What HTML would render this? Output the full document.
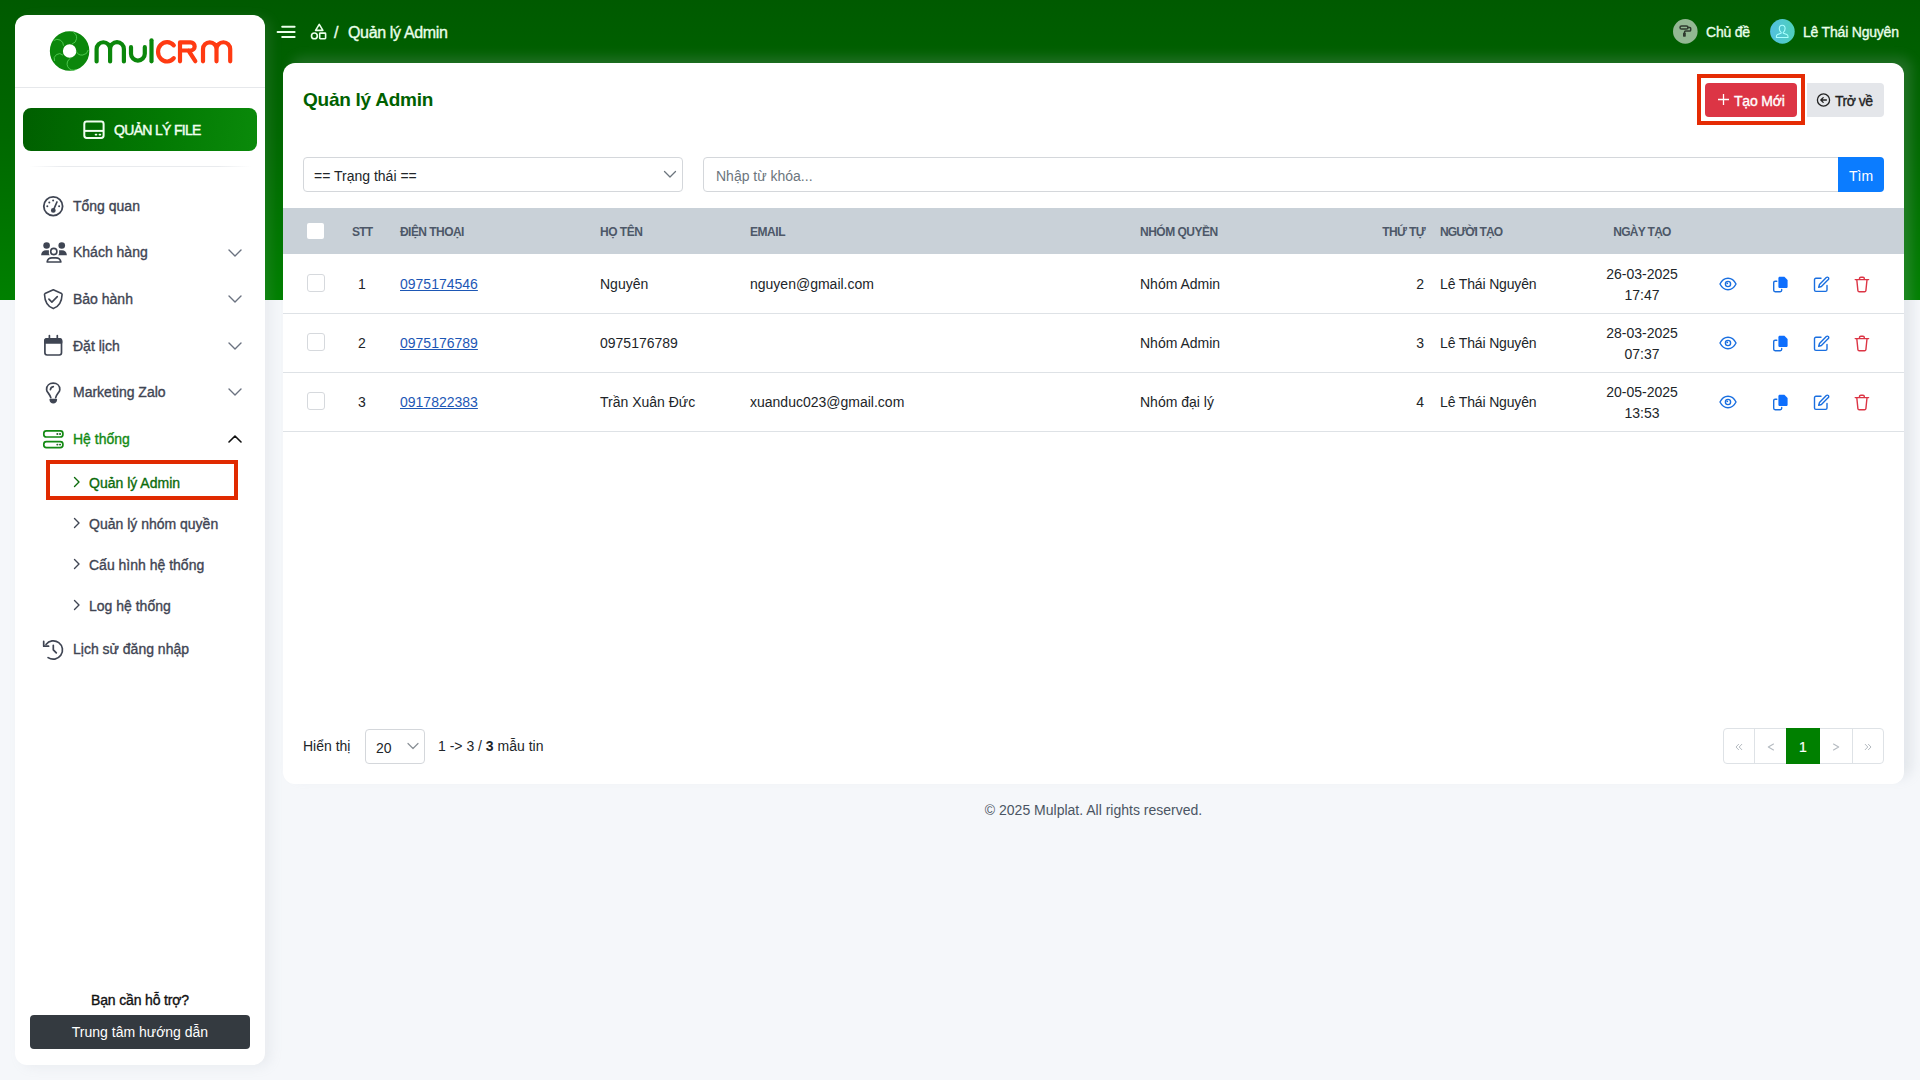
<!DOCTYPE html>
<html lang="vi">
<head>
<meta charset="utf-8">
<title>Quản lý Admin</title>
<style>
*{box-sizing:border-box;margin:0;padding:0}
html,body{width:1920px;height:1080px;overflow:hidden}
body{position:relative;background:#f5f7fa;font-family:"Liberation Sans",sans-serif;font-size:14px;color:#212529}
.abs{position:absolute}
.t{position:absolute;white-space:nowrap;line-height:1}
#bg{left:0;top:0;width:1920px;height:300px;background:linear-gradient(180deg,#005a00 0%,#006800 45%,#008000 100%)}
#side{left:15px;top:15px;width:250px;height:1050px;background:#fff;border-radius:12px;box-shadow:6px 2px 12px rgba(160,170,180,.13)}
#card{left:283px;top:63px;width:1621px;height:721px;background:#fff;border-radius:12px;box-shadow:8px -6px 12px rgba(160,170,180,.2)}
.menu{color:#3f4553;font-size:14px;-webkit-text-stroke:0.35px #3f4553}
.m{-webkit-text-stroke:0.35px currentColor}
.chev{position:absolute;left:228px;width:14px;height:8px}
</style>
</head>
<body>
<div id="bg" class="abs"></div>

<!-- SIDEBAR -->
<div id="side" class="abs"></div>
<div class="abs" style="left:15px;top:87px;width:250px;height:1px;background:#e6e8eb"></div>
<div class="abs" style="left:29px;top:166px;width:222px;height:1px;background:linear-gradient(90deg,rgba(230,232,235,0),#e9ebee 15%,#e9ebee 85%,rgba(230,232,235,0))"></div>

<!-- logo -->
<svg class="abs" style="left:0;top:0" width="265" height="90" viewBox="0 0 265 90">
  <circle cx="69.6" cy="51" r="13.25" fill="none" stroke="#0b870b" stroke-width="13"/>
  <g fill="none" stroke="#5cd65c" stroke-width="0.8">
    <path d="M53.6 40.6 A6.2 6.2 0 0 1 63.5 45.8"/>
    <path d="M73.4 32.3 A6.4 6.4 0 0 1 72 44"/>
    <path d="M76.25 51.6 A6.4 6.4 0 0 0 88.2 50"/>
    <path d="M54.6 61 A5.2 5.2 0 0 1 63 55.2"/>
    <path d="M70.5 58.3 A6 6 0 0 0 76.25 69.5"/>
  </g>
  <g fill="none" stroke="#0b870b" stroke-width="4.2" stroke-linecap="round">
    <path d="M96.6 61.4 V49 A6.75 6.75 0 0 1 110.1 49 V61.4 M110.1 49 A6.9 6.9 0 0 1 123.9 49 V61.4"/>
    <path d="M131 47.2 V53.7 A6.9 6.9 0 0 0 144.8 53.7 V47.2"/>
    <path d="M151.5 40.3 V61.3"/>
  </g>
  <g fill="none" stroke="#ff3a12" stroke-width="4.2" stroke-linecap="round" stroke-linejoin="round">
    <path d="M173.8 45.4 A9 9.7 0 1 0 173.8 58.2"/>
    <path d="M180 61.3 V42.4 H190.6 A4.05 4.05 0 0 1 190.6 50.5 H180 M188.5 50.5 L195.3 61.2"/>
    <path d="M203 61.3 V49.1 A6.75 6.75 0 0 1 216.5 49.1 V61.3 M216.5 49.1 A6.85 6.85 0 0 1 230.2 49.1 V61.3"/>
  </g>
</svg>

<!-- file button -->
<div class="abs" style="left:23px;top:108px;width:234px;height:43px;border-radius:8px;background:linear-gradient(100deg,#005f00 0%,#037a03 60%,#0a8a0a 100%)"></div>
<svg class="abs" style="left:78px;top:114px" width="30" height="30" viewBox="0 0 30 30" fill="none" stroke="#f0fff0" stroke-width="2">
  <rect x="6.3" y="7.6" width="19.3" height="16.4" rx="2.4"/>
  <path d="M6.3 16.9 H25.6"/>
  <path d="M17.6 20.6 h0.8 M21.5 20.6 h0.8" stroke-width="1.8" stroke-linecap="round"/>
</svg>
<div class="t m" style="left:114px;top:123px;font-size:14px;color:#f0fff0;letter-spacing:-0.68px;-webkit-text-stroke:0.45px #f0fff0">QUẢN LÝ FILE</div>

<!-- menu items -->
<svg class="abs" style="left:38px;top:192px" width="30" height="30" viewBox="0 0 30 30" fill="none" stroke="#3f4553" stroke-width="1.6" stroke-linecap="round">
  <circle cx="15.2" cy="14.2" r="9.4" stroke-width="1.8"/>
  <path d="M15.3 18.4 L19 9.9"/>
  <circle cx="15.3" cy="18.4" r="1.6" fill="#3f4553"/>
  <g fill="#3f4553" stroke="none"><circle cx="15.1" cy="8.4" r="1"/><circle cx="11.3" cy="10.4" r="1"/><circle cx="9.3" cy="14.3" r="1"/><circle cx="21.1" cy="14.3" r="1"/></g>
</svg>
<div class="t menu" style="left:73px;top:199px">Tổng quan</div>

<svg class="abs" style="left:38px;top:238px" width="30" height="30" viewBox="0 0 30 30" fill="none" stroke="#3f4553" stroke-width="1.6" stroke-linecap="round" stroke-linejoin="round">
  <g fill="#3f4553" stroke="none">
    <circle cx="8.6" cy="7.5" r="3.3"/><circle cx="23.75" cy="7.5" r="3.3"/>
    <path d="M3.1 17.2 C3.3 14 5.3 12.2 8 12.2 H10.9 V16 L11.8 17.2 Z"/>
    <path d="M28.9 17.2 C28.7 14 26.7 12.2 24 12.2 H21.1 V16 L20.2 17.2 Z"/>
  </g>
  <circle cx="15.8" cy="13.5" r="3.1"/>
  <path d="M9.1 24 C9.5 21.3 11.5 19.9 14 19.9 H17.9 C20.4 19.9 22.4 21.3 22.9 24 Z"/>
</svg>
<div class="t menu" style="left:73px;top:245px">Khách hàng</div>

<svg class="abs" style="left:38px;top:284px" width="30" height="30" viewBox="0 0 30 30" fill="none" stroke="#3f4553" stroke-width="1.6" stroke-linecap="round" stroke-linejoin="round">
  <path d="M15.3 5.8 L23.6 9.6 C23.9 9.8 24.1 10.1 24.1 10.5 C23.8 17.8 21 22.6 15.3 24.6 C9.6 22.6 6.8 17.8 6.5 10.5 C6.5 10.1 6.7 9.8 7 9.6 Z"/>
  <path d="M10.9 15.1 L13.9 18.1 L19.3 12.6"/>
</svg>
<div class="t menu" style="left:73px;top:292px">Bảo hành</div>

<svg class="abs" style="left:38px;top:330px" width="30" height="30" viewBox="0 0 30 30" fill="none" stroke="#3f4553" stroke-width="1.7" stroke-linecap="round" stroke-linejoin="round">
  <rect x="6.9" y="8.8" width="16.6" height="16.2" rx="2.2"/>
  <path d="M6.9 11.2 C6.9 9.8 7.9 8.8 9.1 8.8 H21.3 C22.5 8.8 23.5 9.8 23.5 11.2 V12.8 H6.9 Z" fill="#3f4553"/>
  <path d="M11.4 5.6 V8.4 M19.3 5.6 V8.4"/>
</svg>
<div class="t menu" style="left:73px;top:339px">Đặt lịch</div>

<svg class="abs" style="left:38px;top:377px" width="30" height="30" viewBox="0 0 30 30" fill="none" stroke="#3f4553" stroke-width="1.7" stroke-linecap="round" stroke-linejoin="round">
  <path d="M12.8 20.6 C12.4 18.6 11 17.2 9.7 15.3 C8.9 14.2 8.6 13.2 8.6 12.4 C8.6 8.6 11.5 6.2 15.2 6.2 C18.9 6.2 21.8 8.6 21.8 12.4 C21.8 13.2 21.5 14.2 20.7 15.3 C19.4 17.2 18 18.6 17.7 20.6"/>
  <path d="M12.4 12.6 C12.7 11 13.8 9.9 15.3 9.7"/>
  <path d="M12.3 22.6 H18.3 C18 24.6 16.8 25.6 15.3 25.6 C13.8 25.6 12.6 24.6 12.3 22.6 Z" fill="#3f4553"/>
</svg>
<div class="t menu" style="left:73px;top:385px">Marketing Zalo</div>

<svg class="abs" style="left:38px;top:424px" width="30" height="30" viewBox="0 0 30 30" fill="none" stroke="#138a13" stroke-width="1.7" stroke-linecap="round" stroke-linejoin="round">
  <rect x="5.8" y="6.9" width="19.1" height="6.1" rx="2.6"/>
  <rect x="5.8" y="17.6" width="19.1" height="6.1" rx="2.6"/>
  <path d="M19.2 10 h0.3 M21.9 10 h0.3 M19.2 20.6 h0.3 M21.9 20.6 h0.3" stroke="#2f6a2f" stroke-width="1.8"/>
</svg>
<div class="t m" style="left:73px;top:432px;color:#138a13">Hệ thống</div>

<!-- chevrons -->
<svg class="chev" style="top:249px" viewBox="0 0 14 8" fill="none" stroke="#6b7280" stroke-width="1.4" stroke-linecap="round" stroke-linejoin="round"><path d="M1 1 L7 7 L13 1"/></svg>
<svg class="chev" style="top:295px" viewBox="0 0 14 8" fill="none" stroke="#6b7280" stroke-width="1.4" stroke-linecap="round" stroke-linejoin="round"><path d="M1 1 L7 7 L13 1"/></svg>
<svg class="chev" style="top:342px" viewBox="0 0 14 8" fill="none" stroke="#6b7280" stroke-width="1.4" stroke-linecap="round" stroke-linejoin="round"><path d="M1 1 L7 7 L13 1"/></svg>
<svg class="chev" style="top:388px" viewBox="0 0 14 8" fill="none" stroke="#6b7280" stroke-width="1.4" stroke-linecap="round" stroke-linejoin="round"><path d="M1 1 L7 7 L13 1"/></svg>
<svg class="chev" style="top:434.5px" viewBox="0 0 14 8" fill="none" stroke="#111" stroke-width="1.6" stroke-linecap="round" stroke-linejoin="round"><path d="M1 7 L7 1 L13 7"/></svg>

<!-- sub menu -->
<div class="abs" style="left:46px;top:460px;width:192px;height:40px;border:4.6px solid #e02a00"></div>
<svg class="abs" style="left:72px;top:476px" width="10" height="12" viewBox="0 0 10 12" fill="none" stroke="#0b6b0b" stroke-width="1.4" stroke-linecap="round" stroke-linejoin="round"><path d="M2.5 1.5 L7 6 L2.5 10.5"/></svg>
<div class="t m" style="left:89px;top:476px;color:#0b6b0b">Quản lý Admin</div>
<svg class="abs" style="left:72px;top:517px" width="10" height="12" viewBox="0 0 10 12" fill="none" stroke="#3f4553" stroke-width="1.4" stroke-linecap="round" stroke-linejoin="round"><path d="M2.5 1.5 L7 6 L2.5 10.5"/></svg>
<div class="t menu" style="left:89px;top:517px">Quản lý nhóm quyền</div>
<svg class="abs" style="left:72px;top:558px" width="10" height="12" viewBox="0 0 10 12" fill="none" stroke="#3f4553" stroke-width="1.4" stroke-linecap="round" stroke-linejoin="round"><path d="M2.5 1.5 L7 6 L2.5 10.5"/></svg>
<div class="t menu" style="left:89px;top:558px">Cấu hình hệ thống</div>
<svg class="abs" style="left:72px;top:599px" width="10" height="12" viewBox="0 0 10 12" fill="none" stroke="#3f4553" stroke-width="1.4" stroke-linecap="round" stroke-linejoin="round"><path d="M2.5 1.5 L7 6 L2.5 10.5"/></svg>
<div class="t menu" style="left:89px;top:599px">Log hệ thống</div>

<svg class="abs" style="left:38px;top:634px" width="30" height="30" viewBox="0 0 30 30" fill="none" stroke="#3f4553" stroke-width="1.7" stroke-linecap="round" stroke-linejoin="round">
  <path d="M8 10.4 A9.2 9.2 0 1 1 10.1 23.6"/>
  <path d="M5.7 7.4 V12.2 H10.6"/>
  <path d="M15.3 11.3 V15.8 L18.3 18.9"/>
</svg>
<div class="t menu" style="left:73px;top:642px">Lịch sử đăng nhập</div>

<!-- help -->
<div class="t m" style="left:0;top:993px;width:280px;text-align:center;color:#111;letter-spacing:-0.15px">Bạn cần hỗ trợ?</div>
<div class="abs" style="left:30px;top:1015px;width:220px;height:34px;border-radius:4px;background:#343a40"></div>
<div class="t" style="left:30px;top:1025px;width:220px;text-align:center;color:#fff">Trung tâm hướng dẫn</div>

<!-- HEADER -->
<svg class="abs" style="left:274px;top:20px" width="24" height="24" viewBox="0 0 24 24" fill="none" stroke="#eaffea" stroke-width="2" stroke-linecap="round">
  <path d="M8.2 6.7 H20.6 M3.6 12 H20.6 M8.2 17 H20.6"/>
</svg>
<svg class="abs" style="left:303px;top:17px" width="30" height="30" viewBox="0 0 30 30" fill="none" stroke="#eaffea" stroke-width="1.6" stroke-linejoin="round">
  <path d="M16.25 7.4 L19.9 13.4 H12.6 Z"/>
  <circle cx="11.4" cy="18.9" r="2.9"/>
  <rect x="16.7" y="16.1" width="5.9" height="5.6" rx="0.6"/>
</svg>
<div class="t m" style="left:334px;top:25px;font-size:16px;color:#eaffea">/</div>
<div class="t m" style="left:348px;top:25px;font-size:16px;color:#eaffea;letter-spacing:-0.35px">Quản lý Admin</div>

<svg class="abs" style="left:1670px;top:16px" width="30" height="30" viewBox="0 0 30 30">
  <circle cx="15.3" cy="15.4" r="12.3" fill="#93b893"/>
  <g fill="none" stroke="#2f3a2f" stroke-width="1.5" stroke-linecap="round" stroke-linejoin="round">
    <rect x="10" y="9.9" width="8" height="3.2" rx="1.6"/>
    <path d="M18 11.6 H19.8 C20.4 11.6 20.7 12 20.7 12.5 V14 C20.7 14.7 20.3 15.1 19.6 15.1 H15.6 C15 15.1 14.5 15.5 14.5 16.2 V17"/>
  </g>
  <rect x="13" y="16.7" width="2.8" height="4" rx="0.6" fill="#2f3a2f"/>
</svg>
<div class="t m" style="left:1706px;top:25px;color:#eaffea;letter-spacing:-0.2px">Chủ đề</div>
<svg class="abs" style="left:1767px;top:16px" width="30" height="30" viewBox="0 0 30 30">
  <defs><linearGradient id="ug" x1="0" y1="0" x2="1" y2="0"><stop offset="0" stop-color="#52c0e0"/><stop offset="1" stop-color="#4fd0bc"/></linearGradient></defs>
  <circle cx="15.4" cy="15.4" r="12.3" fill="url(#ug)"/>
  <path d="M15.2 9.3 C13.4 9.3 12.3 10.7 12.3 12.6 C12.3 14.2 13 15.6 14.1 16.4 C14.3 16.6 14.2 17 13.9 17.2 L10.6 18.5 C9.8 18.8 9.4 19.6 9.4 20.5 V21.5 H21 V20.5 C21 19.6 20.6 18.8 19.8 18.5 L16.5 17.2 C16.2 17 16.1 16.6 16.3 16.4 C17.4 15.6 18.1 14.2 18.1 12.6 C18.1 10.7 17 9.3 15.2 9.3 Z" fill="none" stroke="#aaffff" stroke-width="1.1" stroke-linejoin="round"/>
</svg>
<div class="t m" style="left:1803px;top:25px;color:#eaffea;letter-spacing:-0.2px">Lê Thái Nguyên</div>

<!-- CARD -->
<div id="card" class="abs"></div>
<div class="t" style="left:303px;top:90px;font-size:19px;font-weight:bold;color:#006100;letter-spacing:-0.25px">Quản lý Admin</div>

<div class="abs" style="left:1697px;top:74px;width:108px;height:51px;border:4.7px solid #e52b04"></div>
<div class="abs" style="left:1705px;top:83px;width:92px;height:34px;border-radius:4px;background:#dc3545"></div>
<svg class="abs" style="left:1716px;top:92px" width="15" height="15" viewBox="0 0 15 15" fill="none" stroke="#fff" stroke-width="1.3"><path d="M7.5 2 V13 M2 7.5 H13"/></svg>
<div class="t m" style="left:1734px;top:94px;color:#fff;letter-spacing:-0.2px">Tạo Mới</div>
<div class="abs" style="left:1807px;top:83px;width:77px;height:34px;border-radius:0 4px 4px 0;background:#e4e6ea"></div>
<svg class="abs" style="left:1815px;top:92px" width="16" height="16" viewBox="0 0 16 16" fill="none" stroke="#222" stroke-width="1.3" stroke-linecap="round" stroke-linejoin="round"><circle cx="8.5" cy="8" r="6.1"/><path d="M11.4 8 H6 M8.2 5.6 L5.8 8 L8.2 10.4"/></svg>
<div class="t m" style="left:1835px;top:94px;color:#222;letter-spacing:-0.5px">Trở về</div>

<!-- filters -->
<div class="abs" style="left:303px;top:157px;width:380px;height:35px;border:1px solid #d4d7db;border-radius:4px;background:#fff"></div>
<div class="t" style="left:314px;top:169px;color:#212529">== Trạng thái ==</div>
<svg class="abs" style="left:663px;top:170px" width="14" height="9" viewBox="0 0 14 9" fill="none" stroke="#6c757d" stroke-width="1.3" stroke-linecap="round" stroke-linejoin="round"><path d="M1.5 1.5 L7 7 L12.5 1.5"/></svg>
<div class="abs" style="left:703px;top:157px;width:1140px;height:35px;border:1px solid #d4d7db;border-radius:4px 0 0 4px;background:#fff"></div>
<div class="t" style="left:716px;top:169px;color:#6c757d">Nhập từ khóa...</div>
<div class="abs" style="left:1838px;top:157px;width:46px;height:35px;border-radius:0 4px 4px 0;background:#0b7cff"></div>
<div class="t" style="left:1838px;top:169px;width:46px;text-align:center;color:#fff">Tìm</div>

<!-- table -->
<div class="abs" style="left:283px;top:208px;width:1621px;height:46px;background:#c9d1d8"></div>
<div class="abs" style="left:307px;top:223px;width:17px;height:16px;background:#fff;border-radius:2px"></div>
<div class="t" style="left:352px;top:226px;color:#4d5868;font-size:12px;font-weight:bold;letter-spacing:-0.8px">STT</div>
<div class="t" style="left:400px;top:226px;color:#4d5868;font-size:12px;font-weight:bold;letter-spacing:-0.55px">ĐIỆN THOẠI</div>
<div class="t" style="left:600px;top:226px;color:#4d5868;font-size:12px;font-weight:bold;letter-spacing:-0.5px">HỌ TÊN</div>
<div class="t" style="left:750px;top:226px;color:#4d5868;font-size:12px;font-weight:bold;letter-spacing:-0.45px">EMAIL</div>
<div class="t" style="left:1140px;top:226px;color:#4d5868;font-size:12px;font-weight:bold;letter-spacing:-0.5px">NHÓM QUYỀN</div>
<div class="t" style="left:1324px;top:226px;width:101px;text-align:right;color:#4d5868;font-size:12px;font-weight:bold;letter-spacing:-0.65px">THỨ TỰ</div>
<div class="t" style="left:1440px;top:226px;color:#4d5868;font-size:12px;font-weight:bold;letter-spacing:-0.9px">NGƯỜI TẠO</div>
<div class="t" style="left:1592px;top:226px;width:100px;text-align:center;color:#4d5868;font-size:12px;font-weight:bold;letter-spacing:-0.7px">NGÀY TẠO</div>
<div class="abs" style="left:283px;top:313px;width:1621px;height:1px;background:#dee2e6"></div>
<div class="abs" style="left:307px;top:274px;width:18px;height:18px;border:1px solid #d6d9dd;border-radius:3px;background:#fff"></div>
<div class="t" style="left:342px;top:277px;width:40px;text-align:center">1</div>
<div class="t" style="left:400px;top:277px;color:#1d57b5;text-decoration:underline">0975174546</div>
<div class="t" style="left:600px;top:277px">Nguyên</div>
<div class="t" style="left:750px;top:277px">nguyen@gmail.com</div>
<div class="t" style="left:1140px;top:277px">Nhóm Admin</div>
<div class="t" style="left:1384px;top:277px;width:40px;text-align:right">2</div>
<div class="t" style="left:1440px;top:277px;letter-spacing:-0.15px">Lê Thái Nguyên</div>
<div class="t" style="left:1592px;top:267px;width:100px;text-align:center">26-03-2025</div>
<div class="t" style="left:1592px;top:288px;width:100px;text-align:center">17:47</div>
<svg class="abs" style="left:1719px;top:277px" width="18" height="14" viewBox="0 0 18 14" fill="none" stroke="#1a6fe0" stroke-width="1.4"><path d="M1 7 C3 3 5.8 1.3 9 1.3 C12.2 1.3 15 3 17 7 C15 11 12.2 12.7 9 12.7 C5.8 12.7 3 11 1 7 Z"/><circle cx="9" cy="7" r="2.6"/><circle cx="8.3" cy="6.3" r="0.9" fill="#1a6fe0" stroke="none"/></svg>
<svg class="abs" style="left:1772px;top:276px" width="17" height="17" viewBox="0 0 17 17"><path d="M4.8 5.2 H3.1 C2.3 5.2 1.7 5.8 1.7 6.6 V14.3 C1.7 15.1 2.3 15.7 3.1 15.7 H8.3 C9.1 15.7 9.7 15.1 9.7 14.3 V13.5" fill="none" stroke="#1a6fe0" stroke-width="1.4" stroke-linecap="round"/><path d="M7.8 0.8 H12.4 L15.6 4 V10.7 C15.6 11.5 15 12.1 14.2 12.1 H7.8 C7 12.1 6.4 11.5 6.4 10.7 V2.2 C6.4 1.4 7 0.8 7.8 0.8 Z" fill="#0d6efd"/></svg>
<svg class="abs" style="left:1813px;top:276px" width="17" height="17" viewBox="0 0 17 17" fill="none" stroke="#1a6fe0" stroke-width="1.4" stroke-linecap="round" stroke-linejoin="round"><path d="M8 2.3 H2.9 C2.1 2.3 1.5 2.9 1.5 3.7 V14 C1.5 14.8 2.1 15.4 2.9 15.4 H12.6 C13.4 15.4 14 14.8 14 14 V9.4"/><path d="M13.3 1.6 C13.9 1 14.8 1 15.3 1.6 C15.9 2.2 15.9 3.1 15.3 3.6 L8.4 10.5 L5.7 11.3 L6.5 8.5 Z"/></svg>
<svg class="abs" style="left:1854px;top:276px" width="16" height="17" viewBox="0 0 16 17" fill="none" stroke="#dc3545" stroke-width="1.4" stroke-linecap="round" stroke-linejoin="round"><path d="M1.2 3.6 H14.6"/><path d="M5.5 3.4 V2.5 C5.5 1.7 6.1 1.2 6.8 1.2 H9 C9.7 1.2 10.3 1.7 10.3 2.5 V3.4"/><path d="M2.8 3.8 L3.9 14.6 C4 15.3 4.5 15.7 5.2 15.7 H10.6 C11.3 15.7 11.8 15.3 11.9 14.6 L13 3.8"/></svg>
<div class="abs" style="left:283px;top:372px;width:1621px;height:1px;background:#dee2e6"></div>
<div class="abs" style="left:307px;top:333px;width:18px;height:18px;border:1px solid #d6d9dd;border-radius:3px;background:#fff"></div>
<div class="t" style="left:342px;top:336px;width:40px;text-align:center">2</div>
<div class="t" style="left:400px;top:336px;color:#1d57b5;text-decoration:underline">0975176789</div>
<div class="t" style="left:600px;top:336px">0975176789</div>
<div class="t" style="left:1140px;top:336px">Nhóm Admin</div>
<div class="t" style="left:1384px;top:336px;width:40px;text-align:right">3</div>
<div class="t" style="left:1440px;top:336px;letter-spacing:-0.15px">Lê Thái Nguyên</div>
<div class="t" style="left:1592px;top:326px;width:100px;text-align:center">28-03-2025</div>
<div class="t" style="left:1592px;top:347px;width:100px;text-align:center">07:37</div>
<svg class="abs" style="left:1719px;top:336px" width="18" height="14" viewBox="0 0 18 14" fill="none" stroke="#1a6fe0" stroke-width="1.4"><path d="M1 7 C3 3 5.8 1.3 9 1.3 C12.2 1.3 15 3 17 7 C15 11 12.2 12.7 9 12.7 C5.8 12.7 3 11 1 7 Z"/><circle cx="9" cy="7" r="2.6"/><circle cx="8.3" cy="6.3" r="0.9" fill="#1a6fe0" stroke="none"/></svg>
<svg class="abs" style="left:1772px;top:335px" width="17" height="17" viewBox="0 0 17 17"><path d="M4.8 5.2 H3.1 C2.3 5.2 1.7 5.8 1.7 6.6 V14.3 C1.7 15.1 2.3 15.7 3.1 15.7 H8.3 C9.1 15.7 9.7 15.1 9.7 14.3 V13.5" fill="none" stroke="#1a6fe0" stroke-width="1.4" stroke-linecap="round"/><path d="M7.8 0.8 H12.4 L15.6 4 V10.7 C15.6 11.5 15 12.1 14.2 12.1 H7.8 C7 12.1 6.4 11.5 6.4 10.7 V2.2 C6.4 1.4 7 0.8 7.8 0.8 Z" fill="#0d6efd"/></svg>
<svg class="abs" style="left:1813px;top:335px" width="17" height="17" viewBox="0 0 17 17" fill="none" stroke="#1a6fe0" stroke-width="1.4" stroke-linecap="round" stroke-linejoin="round"><path d="M8 2.3 H2.9 C2.1 2.3 1.5 2.9 1.5 3.7 V14 C1.5 14.8 2.1 15.4 2.9 15.4 H12.6 C13.4 15.4 14 14.8 14 14 V9.4"/><path d="M13.3 1.6 C13.9 1 14.8 1 15.3 1.6 C15.9 2.2 15.9 3.1 15.3 3.6 L8.4 10.5 L5.7 11.3 L6.5 8.5 Z"/></svg>
<svg class="abs" style="left:1854px;top:335px" width="16" height="17" viewBox="0 0 16 17" fill="none" stroke="#dc3545" stroke-width="1.4" stroke-linecap="round" stroke-linejoin="round"><path d="M1.2 3.6 H14.6"/><path d="M5.5 3.4 V2.5 C5.5 1.7 6.1 1.2 6.8 1.2 H9 C9.7 1.2 10.3 1.7 10.3 2.5 V3.4"/><path d="M2.8 3.8 L3.9 14.6 C4 15.3 4.5 15.7 5.2 15.7 H10.6 C11.3 15.7 11.8 15.3 11.9 14.6 L13 3.8"/></svg>
<div class="abs" style="left:283px;top:431px;width:1621px;height:1px;background:#dee2e6"></div>
<div class="abs" style="left:307px;top:392px;width:18px;height:18px;border:1px solid #d6d9dd;border-radius:3px;background:#fff"></div>
<div class="t" style="left:342px;top:395px;width:40px;text-align:center">3</div>
<div class="t" style="left:400px;top:395px;color:#1d57b5;text-decoration:underline">0917822383</div>
<div class="t" style="left:600px;top:395px">Trần Xuân Đức</div>
<div class="t" style="left:750px;top:395px">xuanduc023@gmail.com</div>
<div class="t" style="left:1140px;top:395px">Nhóm đại lý</div>
<div class="t" style="left:1384px;top:395px;width:40px;text-align:right">4</div>
<div class="t" style="left:1440px;top:395px;letter-spacing:-0.15px">Lê Thái Nguyên</div>
<div class="t" style="left:1592px;top:385px;width:100px;text-align:center">20-05-2025</div>
<div class="t" style="left:1592px;top:406px;width:100px;text-align:center">13:53</div>
<svg class="abs" style="left:1719px;top:395px" width="18" height="14" viewBox="0 0 18 14" fill="none" stroke="#1a6fe0" stroke-width="1.4"><path d="M1 7 C3 3 5.8 1.3 9 1.3 C12.2 1.3 15 3 17 7 C15 11 12.2 12.7 9 12.7 C5.8 12.7 3 11 1 7 Z"/><circle cx="9" cy="7" r="2.6"/><circle cx="8.3" cy="6.3" r="0.9" fill="#1a6fe0" stroke="none"/></svg>
<svg class="abs" style="left:1772px;top:394px" width="17" height="17" viewBox="0 0 17 17"><path d="M4.8 5.2 H3.1 C2.3 5.2 1.7 5.8 1.7 6.6 V14.3 C1.7 15.1 2.3 15.7 3.1 15.7 H8.3 C9.1 15.7 9.7 15.1 9.7 14.3 V13.5" fill="none" stroke="#1a6fe0" stroke-width="1.4" stroke-linecap="round"/><path d="M7.8 0.8 H12.4 L15.6 4 V10.7 C15.6 11.5 15 12.1 14.2 12.1 H7.8 C7 12.1 6.4 11.5 6.4 10.7 V2.2 C6.4 1.4 7 0.8 7.8 0.8 Z" fill="#0d6efd"/></svg>
<svg class="abs" style="left:1813px;top:394px" width="17" height="17" viewBox="0 0 17 17" fill="none" stroke="#1a6fe0" stroke-width="1.4" stroke-linecap="round" stroke-linejoin="round"><path d="M8 2.3 H2.9 C2.1 2.3 1.5 2.9 1.5 3.7 V14 C1.5 14.8 2.1 15.4 2.9 15.4 H12.6 C13.4 15.4 14 14.8 14 14 V9.4"/><path d="M13.3 1.6 C13.9 1 14.8 1 15.3 1.6 C15.9 2.2 15.9 3.1 15.3 3.6 L8.4 10.5 L5.7 11.3 L6.5 8.5 Z"/></svg>
<svg class="abs" style="left:1854px;top:394px" width="16" height="17" viewBox="0 0 16 17" fill="none" stroke="#dc3545" stroke-width="1.4" stroke-linecap="round" stroke-linejoin="round"><path d="M1.2 3.6 H14.6"/><path d="M5.5 3.4 V2.5 C5.5 1.7 6.1 1.2 6.8 1.2 H9 C9.7 1.2 10.3 1.7 10.3 2.5 V3.4"/><path d="M2.8 3.8 L3.9 14.6 C4 15.3 4.5 15.7 5.2 15.7 H10.6 C11.3 15.7 11.8 15.3 11.9 14.6 L13 3.8"/></svg>
<div class="t" style="left:303px;top:739px">Hiển thị</div>
<div class="abs" style="left:365px;top:729px;width:60px;height:35px;border:1px solid #d4d7db;border-radius:4px;background:#fff"></div>
<div class="t" style="left:376px;top:741px">20</div>
<svg class="abs" style="left:406px;top:742px" width="14" height="9" viewBox="0 0 14 9" fill="none" stroke="#8a9096" stroke-width="1.2" stroke-linecap="round" stroke-linejoin="round"><path d="M2 1.5 L7 6.5 L12 1.5"/></svg>
<div class="t" style="left:438px;top:739px">1 -&gt; 3 / <b>3</b> mẫu tin</div>
<div class="abs" style="left:1723px;top:728px;width:161px;height:36px;border:1px solid #dee2e6;border-radius:4px;background:#fff"></div>
<div class="abs" style="left:1754px;top:728px;width:1px;height:36px;background:#dee2e6"></div>
<div class="abs" style="left:1852px;top:728px;width:1px;height:36px;background:#dee2e6"></div>
<div class="abs" style="left:1786px;top:728px;width:34px;height:36px;background:#008000"></div>
<svg class="abs" style="left:1734px;top:742px" width="10" height="10" viewBox="0 0 10 10" fill="none" stroke="#b5bbc1" stroke-width="1" stroke-linecap="round" stroke-linejoin="round"><path d="M4.6 2.3 L2 5 L4.6 7.7 M7.8 2.3 L5.2 5 L7.8 7.7"/></svg>
<svg class="abs" style="left:1766px;top:742px" width="10" height="10" viewBox="0 0 10 10" fill="none" stroke="#b5bbc1" stroke-width="1.1" stroke-linecap="round" stroke-linejoin="round"><path d="M7.5 2 L2.3 5 L7.5 8"/></svg>
<div class="t" style="left:1786px;top:740px;width:34px;text-align:center;color:#fff;font-size:14px;-webkit-text-stroke:0.2px #fff">1</div>
<svg class="abs" style="left:1831px;top:742px" width="10" height="10" viewBox="0 0 10 10" fill="none" stroke="#b5bbc1" stroke-width="1.1" stroke-linecap="round" stroke-linejoin="round"><path d="M2.5 2 L7.7 5 L2.5 8"/></svg>
<svg class="abs" style="left:1863px;top:742px" width="10" height="10" viewBox="0 0 10 10" fill="none" stroke="#b5bbc1" stroke-width="1" stroke-linecap="round" stroke-linejoin="round"><path d="M2.2 2.3 L4.8 5 L2.2 7.7 M5.4 2.3 L8 5 L5.4 7.7"/></svg>
<div class="t" style="left:283px;top:803px;width:1621px;text-align:center;color:#4b5563">© 2025 Mulplat. All rights reserved.</div>

</body>
</html>
